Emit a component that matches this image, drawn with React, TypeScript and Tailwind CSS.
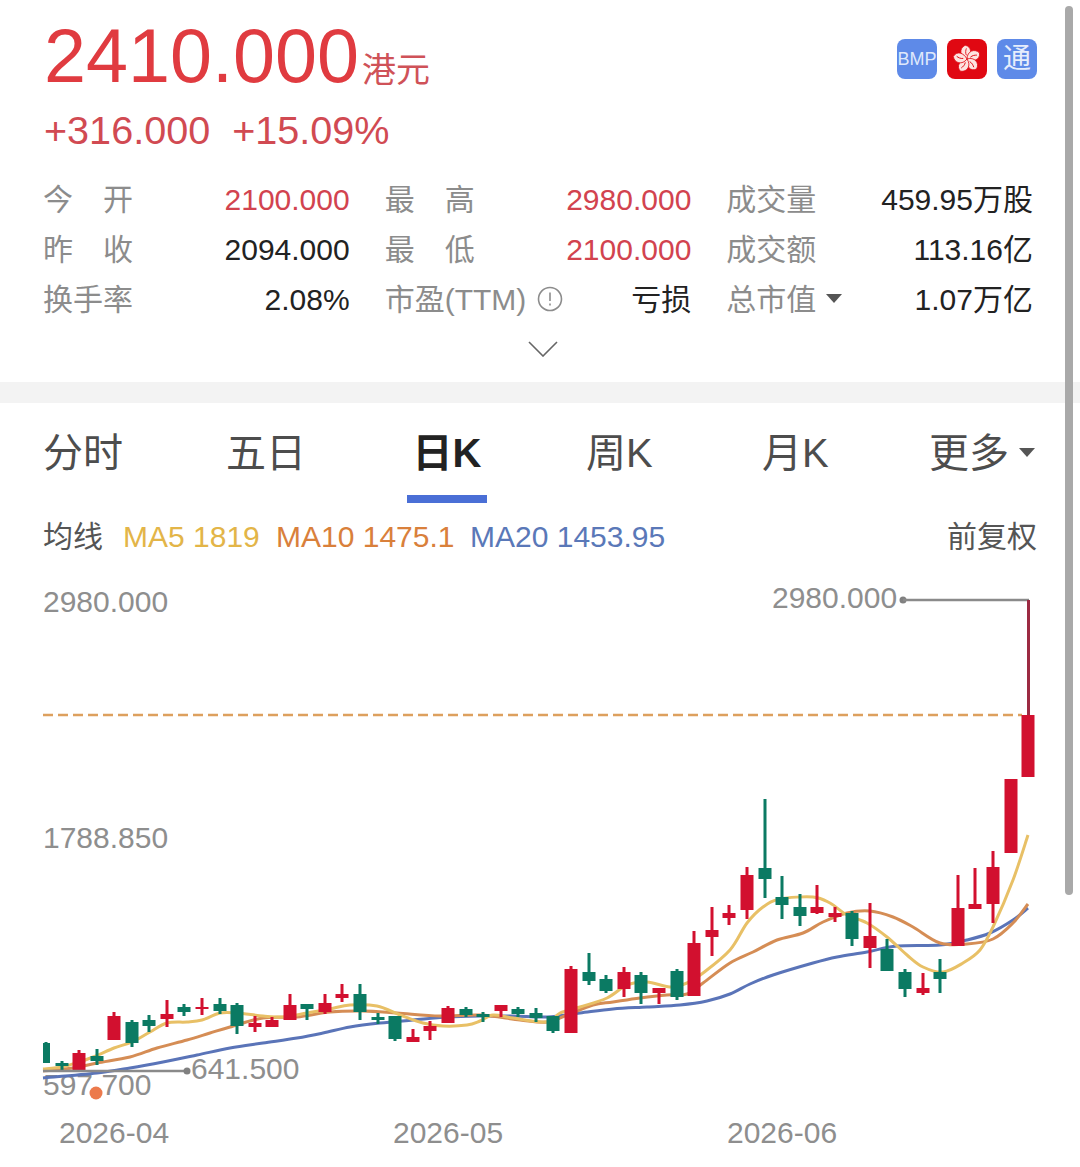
const RED = "#d2102f";
const GREEN = "#0b7a63";

// x, body-top, body-bottom, wick-top, wick-bottom, up?
const candles: [number, number, number, number, number, boolean][] = [
  [46, 1043, 1063, 1042, 1063, false],
  [62, 1063, 1066, 1061, 1070, false],
  [79, 1053, 1070, 1050, 1070, true],
  [97, 1056, 1061, 1049, 1065, false],
  [114, 1016, 1040, 1012, 1040, true],
  [132, 1022, 1043, 1020, 1047, false],
  [149, 1020, 1026, 1015, 1032, false],
  [167, 1014, 1019, 1000, 1027, true],
  [184, 1007, 1012, 1004, 1016, false],
  [202, 1007, 1009, 998, 1015, true],
  [220, 1004, 1011, 998, 1014, false],
  [237, 1005, 1026, 1003, 1034, false],
  [255, 1023, 1027, 1016, 1032, true],
  [272, 1020, 1027, 1017, 1027, true],
  [290, 1005, 1020, 994, 1020, true],
  [307, 1004, 1009, 1004, 1020, false],
  [325, 1003, 1012, 994, 1014, true],
  [342, 994, 998, 984, 1002, true],
  [360, 994, 1012, 984, 1020, false],
  [378, 1017, 1020, 1013, 1024, false],
  [395, 1016, 1039, 1016, 1041, false],
  [413, 1037, 1042, 1029, 1042, true],
  [430, 1026, 1031, 1021, 1040, true],
  [448, 1008, 1023, 1006, 1023, true],
  [466, 1009, 1015, 1007, 1017, false],
  [483, 1014, 1017, 1012, 1022, false],
  [501, 1005, 1011, 1005, 1017, true],
  [518, 1009, 1014, 1007, 1017, false],
  [536, 1013, 1018, 1008, 1022, false],
  [553, 1016, 1031, 1016, 1033, false],
  [571, 969, 1033, 966, 1033, true],
  [589, 972, 981, 953, 985, false],
  [606, 979, 991, 975, 993, false],
  [624, 972, 989, 967, 997, true],
  [641, 975, 993, 972, 1004, false],
  [659, 988, 993, 988, 1004, true],
  [677, 971, 997, 969, 1000, false],
  [694, 943, 996, 931, 996, true],
  [712, 930, 937, 907, 956, true],
  [729, 913, 918, 905, 925, true],
  [747, 875, 910, 867, 919, true],
  [765, 868, 879, 799, 898, false],
  [782, 897, 905, 876, 919, false],
  [800, 907, 916, 894, 926, false],
  [817, 907, 913, 885, 914, true],
  [835, 913, 917, 907, 922, true],
  [852, 913, 939, 911, 946, false],
  [870, 936, 948, 903, 968, true],
  [887, 949, 971, 939, 971, false],
  [905, 972, 989, 969, 997, false],
  [923, 988, 993, 973, 995, true],
  [940, 972, 979, 959, 993, false],
  [958, 908, 946, 875, 946, true],
  [975, 904, 909, 868, 909, true],
  [993, 867, 904, 851, 923, true],
  [1011, 779, 853, 779, 853, true],
  [1028, 715, 777, 715, 777, true],
];

const ma5: [number, number][] = [
  [43, 1069], [62, 1067], [79, 1062], [96, 1056], [114, 1048], [132, 1042], [150, 1032], [167, 1023], [187, 1022],
  [202, 1020], [220, 1013], [237, 1013], [263, 1016], [283, 1017], [307, 1013], [330, 1009], [350, 1005], [377, 1006],
  [400, 1015], [423, 1023], [443, 1026], [467, 1025], [480, 1021], [493, 1015], [513, 1018], [547, 1022], [560, 1013],
  [580, 1007], [607, 998], [627, 985], [647, 982], [670, 987], [687, 983], [703, 973], [730, 950], [747, 923],
  [763, 907], [780, 899], [813, 897], [830, 903], [847, 915], [867, 923], [887, 937], [907, 955], [923, 967],
  [943, 972], [963, 963], [980, 950], [993, 927], [1013, 880], [1028, 835],
];
const ma10: [number, number][] = [
  [43, 1071], [73, 1068], [97, 1063], [130, 1057], [157, 1048], [187, 1040], [210, 1033], [230, 1027], [263, 1018],
  [297, 1017], [330, 1012], [363, 1011], [397, 1013], [440, 1016], [480, 1015], [520, 1020], [547, 1022], [567, 1015],
  [593, 1005], [613, 1002], [640, 998], [667, 995], [687, 994], [703, 983], [730, 963], [753, 952], [777, 940],
  [803, 933], [823, 922], [847, 913], [870, 911], [893, 917], [913, 927], [940, 943], [967, 944], [993, 939],
  [1013, 923], [1028, 904],
];
const ma20: [number, number][] = [
  [43, 1078], [97, 1073], [130, 1068], [163, 1062], [197, 1055], [230, 1048], [263, 1043], [297, 1038], [323, 1033],
  [350, 1027], [380, 1023], [413, 1020], [447, 1017], [480, 1016], [513, 1016], [547, 1017], [580, 1013], [613, 1009],
  [647, 1007], [680, 1005], [707, 1001], [730, 994], [750, 984], [773, 975], [813, 963], [837, 957], [867, 952],
  [897, 946], [940, 945], [967, 940], [990, 933], [1013, 920], [1028, 908],
];

// catmull-rom through the sampled points
function smooth(p: [number, number][]) {
  let d = `M${p[0][0]} ${p[0][1]}`;
  for (let i = 0; i < p.length - 1; i++) {
    const a = p[Math.max(i - 1, 0)];
    const b = p[i];
    const c = p[i + 1];
    const e = p[Math.min(i + 2, p.length - 1)];
    d += ` C${b[0] + (c[0] - a[0]) / 6} ${b[1] + (c[1] - a[1]) / 6} ${c[0] - (e[0] - b[0]) / 6} ${c[1] - (e[1] - b[1]) / 6} ${c[0]} ${c[1]}`;
  }
  return d;
}

function Label({ chars }: { chars: string[] }) {
  return (
    <span className="flex w-[90px] justify-between text-[#8c8c8c]">
      {chars.map((c) => (
        <span key={c}>{c}</span>
      ))}
    </span>
  );
}

function Stat({ label, value, color }: { label: React.ReactNode; value: string; color: string }) {
  return (
    <div className="flex h-[50px] items-center justify-between">
      {label}
      <span className={color}>{value}</span>
    </div>
  );
}

function Badge({ children, className }: { children: React.ReactNode; className: string }) {
  return (
    <div className={`flex h-10 w-10 items-center justify-center rounded-lg ${className}`}>{children}</div>
  );
}

function Chart() {
  return (
    <svg viewBox="0 570 1080 597" className="block h-[597px] w-[1080px]" fontSize="30" fill="#8e8e8e">
      <text x="43" y="612">2980.000</text>
      <text x="43" y="848">1788.850</text>
      <text x="772" y="608">2980.000</text>
      <circle cx="903" cy="600" r="3.5" fill="#808080" />
      <path d="M903 600H1029" fill="none" stroke="#8a8a8a" strokeWidth="2.5" />
      <line x1="1028.5" y1="600" x2="1028.5" y2="715" stroke="#9c2a42" strokeWidth="3" />
      <line x1="43" y1="715" x2="1022" y2="715" stroke="#dda05e" strokeWidth="2.5" strokeDasharray="10 5" />
      <text x="43" y="1095">597.700</text>
      <path d={smooth(ma20)} fill="none" stroke="#5a74b8" strokeWidth="3" />
      <path d={smooth(ma10)} fill="none" stroke="#d58d55" strokeWidth="3" />
      <path d={smooth(ma5)} fill="none" stroke="#e8c066" strokeWidth="3" />
      {candles.map(([x, top, bottom, wickTop, wickBottom, up]) => (
        <g key={x} fill={up ? RED : GREEN}>
          <rect x={x - 1.5} y={wickTop} width="3" height={wickBottom - wickTop} />
          <rect x={Math.max(x - 6.5, 43)} y={top} width={x < 50 ? 7 : 13} height={bottom - top} />
        </g>
      ))}
      <line x1="43" y1="1071" x2="187" y2="1071" stroke="#8a8a8a" strokeWidth="2.5" />
      <circle cx="187" cy="1071" r="3.5" fill="#808080" />
      <text x="191" y="1079">641.500</text>
      <circle cx="96" cy="1093" r="6.5" fill="#ec7a4c" />
      <text x="59" y="1143">2026-04</text>
      <text x="393" y="1143">2026-05</text>
      <text x="727" y="1143">2026-06</text>
    </svg>
  );
}

export default function App() {
  return (
    <div className="relative h-[1167px] w-[1080px] overflow-hidden bg-white [font-family:'Liberation_Sans','Noto_Sans_CJK_SC',sans-serif]">
      {/* scrollbar */}
      <div className="absolute left-[1065px] top-[6px] h-[889px] w-[8px] rounded-full bg-[#a9a9a9]" />

      {/* quote head */}
      <div className="flex items-start justify-between pl-[44px] pr-[43px]">
        <div>
          <div className="flex h-[112px] items-baseline pt-[14px] text-[#e03b40]">
            <span className="text-[75.5px] leading-[84px]">2410.000</span>
            <span className="ml-[3px] text-[34px] text-[#cf5258]">港元</span>
          </div>
          <div className="flex h-[36px] items-center gap-[22px] text-[39.6px] leading-[36px] text-[#d14a52]">
            <span>+316.000</span>
            <span>+15.09%</span>
          </div>
        </div>
        <div className="flex gap-[10px] pt-[39px]">
          <Badge className="bg-[#5e8ae8] text-[18px] text-[#dfe8fb]">BMP</Badge>
          <Badge className="bg-[#e00812]">
            <svg viewBox="-12 -12 24 24" className="h-[30px] w-[30px]" fill="#fde4e0">
              {[0, 72, 144, 216, 288].map((r) => (
                <g key={r} transform={`rotate(${r})`}>
                  <path d="M0 0C-6 -2 -6.5 -8.5 -1.5 -11C4 -10 4 -4 0 0Z" stroke="#e00812" strokeWidth="0.6" />
                  <path d="M-0.5 -3C-1.5 -5 -1 -7 -0.5 -8.5" fill="none" stroke="#e00812" strokeWidth="0.7" />
                </g>
              ))}
            </svg>
          </Badge>
          <Badge className="bg-[#5e8ae8] text-[28px] text-[#e6edfc]">通</Badge>
        </div>
      </div>

      {/* stats */}
      <div className="mt-[26px] grid grid-cols-3 gap-x-[35px] pl-[43px] pr-[47px] text-[30px] text-[#222]">
        <Stat label={<Label chars={["今", "开"]} />} value="2100.000" color="text-[#d2434f]" />
        <Stat label={<Label chars={["最", "高"]} />} value="2980.000" color="text-[#d2434f]" />
        <Stat label={<span className="text-[#8c8c8c]">成交量</span>} value="459.95万股" color="text-[#222]" />
        <Stat label={<Label chars={["昨", "收"]} />} value="2094.000" color="text-[#222]" />
        <Stat label={<Label chars={["最", "低"]} />} value="2100.000" color="text-[#d2434f]" />
        <Stat label={<span className="text-[#8c8c8c]">成交额</span>} value="113.16亿" color="text-[#222]" />
        <Stat label={<span className="text-[#8c8c8c]">换手率</span>} value="2.08%" color="text-[#222]" />
        <Stat
          label={
            <span className="flex items-center gap-[11px] text-[#8c8c8c]">
              市盈(TTM)
              <svg viewBox="0 0 26 26" className="h-[26px] w-[26px]" fill="none" stroke="#8c8c8c" strokeWidth="1.6">
                <circle cx="13" cy="13" r="11.5" />
                <path d="M13 6.5V15M13 17.5V19.5" />
              </svg>
            </span>
          }
          value="亏损"
          color="text-[#222]"
        />
        <Stat
          label={
            <span className="flex items-center gap-[10px] text-[#8c8c8c]">
              总市值
              <svg viewBox="0 0 16 10" className="h-[10px] w-[16px]" fill="#555">
                <path d="M0 0H16L8 9Z" />
              </svg>
            </span>
          }
          value="1.07万亿"
          color="text-[#222]"
        />
      </div>
      <div className="flex h-[49px] items-center justify-center pl-[6px]">
        <svg viewBox="0 0 30 16" className="h-[16px] w-[30px]" fill="none" stroke="#666" strokeWidth="1.6">
          <path d="M1 1L15 15L29 1" />
        </svg>
      </div>
      <div className="mt-[9px] h-[21px] bg-[#f3f3f3]" />

      {/* period tabs */}
      <div className="flex h-[104px] items-start pl-[43px] pr-[45px] text-[40px] text-[#4d4d4d]">
        <div className="flex h-full w-[364px] pt-[20px]">
          <span className="w-[183px]">分时</span>
          <span>五日</span>
        </div>
        <div className="flex h-full w-[80px] flex-col items-center justify-between pt-[20px]">
          <span className="font-bold text-[#222]">日K</span>
          <span className="mb-[4px] h-[8px] w-[80px] bg-[#4a6fd6]" />
        </div>
        <div className="flex flex-1 items-center pt-[20px]">
          <span className="ml-[99px] w-[176px]">周K</span>
          <span>月K</span>
          <span className="ml-auto flex items-center gap-[10px]">
            更多
            <svg viewBox="0 0 16 10" className="h-[10px] w-[16px]" fill="#555">
              <path d="M0 0H16L8 9Z" />
            </svg>
          </span>
        </div>
      </div>

      {/* moving averages */}
      <div className="flex h-[63px] items-center justify-between pl-[43px] pr-[43px] pb-[4px] text-[30px] text-[#555]">
        <div className="flex">
          <span className="w-[80px]">均线</span>
          <span className="w-[153px] text-[#e3b548]">MA5 1819</span>
          <span className="w-[194px] text-[#d9803b]">MA10 1475.1</span>
          <span className="text-[#5a78b8]">MA20 1453.95</span>
        </div>
        <span>前复权</span>
      </div>

      <Chart />
    </div>
  );
}
